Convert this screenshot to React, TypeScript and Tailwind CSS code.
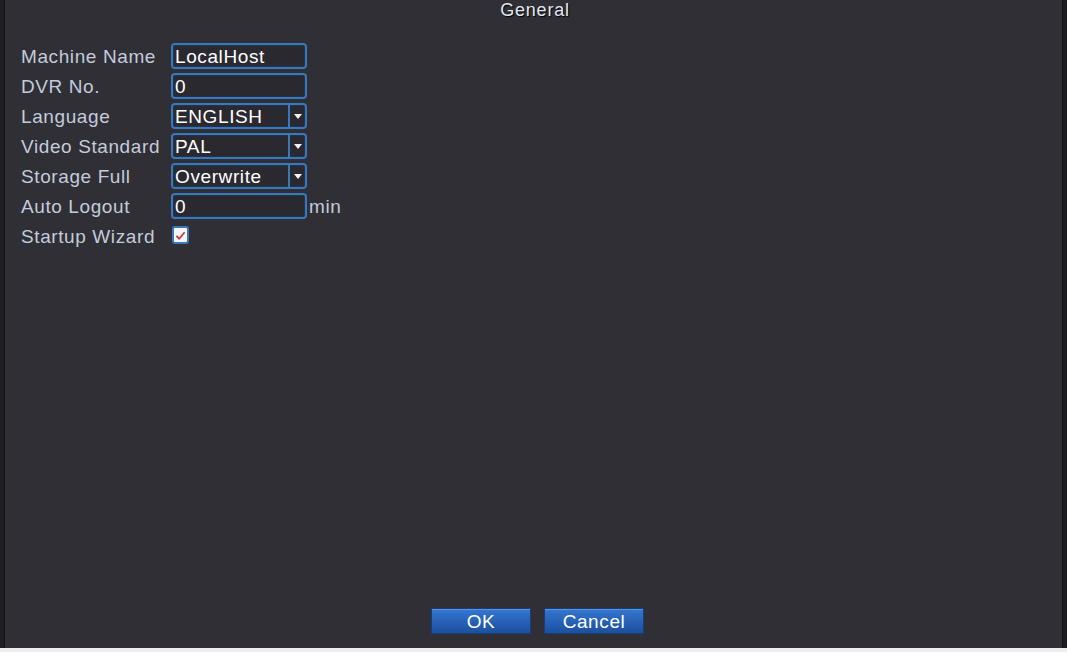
import { clsx } from "clsx"

const FONT = "font-['Liberation_Sans',Arial,sans-serif]"

type Row =
  | { label: string; kind: "text"; value: string; unit?: string }
  | { label: string; kind: "select"; value: string }
  | { label: string; kind: "check"; checked: boolean }

const ROWS: Row[] = [
  { label: "Machine Name", kind: "text", value: "LocalHost" },
  { label: "DVR No.", kind: "text", value: "0" },
  { label: "Language", kind: "select", value: "ENGLISH" },
  { label: "Video Standard", kind: "select", value: "PAL" },
  { label: "Storage Full", kind: "select", value: "Overwrite" },
  { label: "Auto Logout", kind: "text", value: "0", unit: "min" },
  { label: "Startup Wizard", kind: "check", checked: true },
]

const BOX =
  "flex h-[26px] w-[136px] items-center rounded-[4px] border-2 border-[#3a78ba] bg-[#2a292f] text-[19px] leading-none tracking-[0.6px] text-white shadow-[inset_0_0_0_1px_#1d3552]"

const Field = ({ row }: { row: Row }) => {
  if (row.kind === "check") {
    return (
      <div className="flex h-[26px] items-center">
        <span className="mb-[2px] ml-[1px] flex h-[18px] w-[17px] items-center justify-center rounded-[3px] border-2 border-[#3a78ba] bg-[#f4f6fa]">
          {row.checked && (
            <svg viewBox="0 0 12 12" className="h-[11px] w-[11px]">
              <path d="M1.5 6.5 L4.5 9.5 L10.5 2.5" fill="none" stroke="#d0302a" strokeWidth="1.8" />
            </svg>
          )}
        </span>
      </div>
    )
  }

  if (row.kind === "select") {
    return (
      <div className={BOX}>
        <span className="flex-1 pl-[2px]">{row.value}</span>
        <span className="flex h-full w-[17px] items-center justify-center border-l-2 border-[#3a78ba]">
          <svg viewBox="0 0 8 5" className="h-[5px] w-[8px]">
            <path d="M0 0 H8 L4 5 Z" fill="#f2f2f2" />
          </svg>
        </span>
      </div>
    )
  }

  return (
    <div className="flex items-center">
      <div className={BOX}>
        <span className="pl-[2px]">{row.value}</span>
      </div>
      {row.unit && (
        <span className="ml-[2px] text-[19px] leading-none tracking-[0.6px] text-[#c3cbdc]">
          {row.unit}
        </span>
      )}
    </div>
  )
}

const DialogButton = ({ children }: { children: string }) => (
  <button
    type="button"
    className="flex h-[26px] w-[100px] items-center justify-center border border-[#173e78] bg-gradient-to-b from-[#3577d0] to-[#1b4f9f] text-[19px] leading-none tracking-[0.6px] text-white shadow-[inset_0_1px_0_#5a93de]"
  >
    {children}
  </button>
)

export default function App() {
  return (
    <div className={clsx("flex h-[652px] w-full flex-col bg-[#eeeeee]", FONT)}>
      <div className="flex h-[648px]">
        <div className="w-[5px] border-r border-[#121214] bg-[#1f1f23]" />

        <div className="flex flex-1 flex-col bg-[#302f36]">
          <h1 className="flex h-[20px] items-center justify-center pl-[3px] text-[18px] leading-none tracking-[0.8px] text-[#e2e8f2] [text-shadow:1px_1px_1px_#000]">
            General
          </h1>

          <div className="mt-[23px] flex flex-col gap-[4px] pl-[16px]">
            {ROWS.map((row) => (
              <div key={row.label} className="flex items-center">
                <span className="w-[150px] text-[19px] leading-none tracking-[0.6px] text-[#c3cbdc]">
                  {row.label}
                </span>
                <Field row={row} />
              </div>
            ))}
          </div>

          <div className="mt-auto flex justify-center gap-[13px] pb-[14px] pl-[8px]">
            <DialogButton>OK</DialogButton>
            <DialogButton>Cancel</DialogButton>
          </div>
        </div>

        <div className="w-[5px] border-l border-[#121214] bg-[#1c1c20]" />
      </div>
    </div>
  )
}
